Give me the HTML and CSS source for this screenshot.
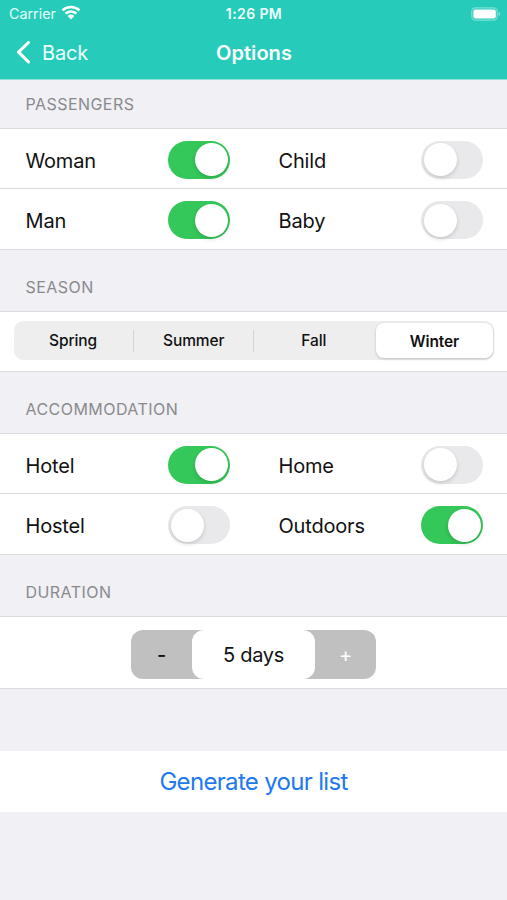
FILE: index.html
```html
<!DOCTYPE html>
<html lang="en">
<head>
<meta charset="utf-8">
<title>Options</title>
<link rel="stylesheet" href="styles.css">
</head>
<body>
<header class="top">
  <div class="status">
    <div class="carrier"><span>Carrier</span>
      <svg class="wifi" width="20" height="15" viewBox="0 0 20 15"><g fill="none" stroke="#fff" stroke-width="2.5"><path d="M1.500 5.400a12.400 12.400 0 0 1 17 0"/><path d="M4.500 8.700a7.900 7.900 0 0 1 11 0"/></g><path d="M6.600 10.900a4.900 4.900 0 0 1 6.800 0L10 14.500z" fill="#fff"/></svg>
    </div>
    <span class="clock">1:26 PM</span>
    <svg class="battery" width="30" height="14" viewBox="0 0 30 14"><rect x=".8" y=".8" width="25.4" height="12.4" rx="3.6" fill="none" stroke="#fff" stroke-opacity=".4" stroke-width="1.2"/><rect x="2.4" y="2.400" width="22.4" height="9.2" rx="2" fill="#fff"/><path d="M27.700 5v4q1.400-.6 1.400-2t-1.400-2z" fill="#fff" fill-opacity=".5"/></svg>
  </div>
  <nav class="nav">
    <a class="back"><svg width="16" height="24" viewBox="0 0 16 24"><path d="M13.500 1.500 3.500 11.200 13.500 20.900" fill="none" stroke="#fff" stroke-width="3" stroke-linecap="round" stroke-linejoin="round"/></svg><span>Back</span></a>
    <h1 class="title">Options</h1>
  </nav>
</header>
<main>
  <h2 class="label first">PASSENGERS</h2>
  <section class="group">
    <div class="row">
      <div class="cell"><span>Woman</span><i class="switch on"></i></div>
      <div class="cell"><span>Child</span><i class="switch"></i></div>
    </div>
    <div class="row">
      <div class="cell"><span>Man</span><i class="switch on"></i></div>
      <div class="cell"><span>Baby</span><i class="switch"></i></div>
    </div>
  </section>
  <h2 class="label">SEASON</h2>
  <section class="group season">
    <div class="segments">
      <span class="seg">Spring</span><span class="seg">Summer</span><span class="seg">Fall</span><span class="seg active">Winter</span>
    </div>
  </section>
  <h2 class="label">ACCOMMODATION</h2>
  <section class="group">
    <div class="row">
      <div class="cell"><span>Hotel</span><i class="switch on"></i></div>
      <div class="cell"><span>Home</span><i class="switch"></i></div>
    </div>
    <div class="row">
      <div class="cell"><span>Hostel</span><i class="switch"></i></div>
      <div class="cell"><span>Outdoors</span><i class="switch on"></i></div>
    </div>
  </section>
  <h2 class="label">DURATION</h2>
  <section class="group duration">
    <div class="stepper"><span class="step minus">-</span><span class="value">5 days</span><span class="step plus">+</span></div>
  </section>
  <a class="generate">Generate your list</a>
</main>
</body>
</html>
```
FILE: styles.css
```css
* { box-sizing: border-box; }
body {
  margin: 0;
  height: 900px;
  background: #f0f0f5;
  color: #111;
  font-family: Inter, "Liberation Sans", sans-serif;
  overflow: hidden;
}
h1, h2 { margin: 0; font-weight: 400; }

.top { height: 80px; background: #26ccb9; border-bottom: 1px solid #8fe0d7; color: #fff; }
.status {
  height: 27px;
  padding: 0 6px 0 9px;
  display: grid;
  grid-template-columns: 1fr auto 1fr;
  align-items: center;
}
.carrier { display: flex; align-items: center; gap: 5px; font-size: 14.3px; color: #e4fcf8; }
.wifi { margin-top: -2px; }
.clock { font-size: 14px; font-weight: 600; letter-spacing: .4px; color: #effffc; margin-right: 2px; }
.battery { justify-self: end; }
.nav {
  height: 51px;
  padding-left: 15px;
  display: grid;
  grid-template-columns: 1fr auto 1fr;
  align-items: center;
}
.back { display: flex; align-items: center; gap: 11px; font-size: 20px; letter-spacing: -.2px; color: #effffc; }
.title { font-size: 20px; font-weight: 600; letter-spacing: .05px; margin-right: 14px; }

.label {
  height: 61px;
  padding: 13px 25.5px 0;
  display: flex;
  align-items: center;
  font-size: 16px;
  letter-spacing: .45px;
  color: #8a8a8e;
}
.label.first { height: 48px; padding-top: 0; }

.group { background: #fff; border: solid #dcdce0; border-width: 1px 0; }
.row { height: 59px; display: grid; grid-template-columns: 253px 253px; }
.row + .row { border-top: 1px solid #dcdce0; height: 61px; }
.cell {
  display: flex;
  align-items: center;
  justify-content: space-between;
  padding: 2px 23px 0 25.5px;
  font-size: 20px;
  letter-spacing: -.18px;
}
.cell span { padding-top: 2px; }
.switch {
  width: 62px;
  height: 38px;
  padding: 2.5px;
  border-radius: 19px;
  background: #e9e9eb;
  display: flex;
}
.switch::before {
  content: "";
  width: 33px;
  height: 33px;
  border-radius: 50%;
  background: #fff;
  box-shadow: 0 2px 4px rgba(0, 0, 0, .15);
}
.switch.on { background: #34c759; justify-content: flex-end; }

.season { height: 61px; padding: 9px 13px 0 13.5px; }
.segments {
  height: 39px;
  display: grid;
  grid-template-columns: repeat(4, 1fr);
  align-items: center;
  background: #eee;
  border-radius: 9px;
  font-size: 15.5px;
  font-weight: 500;
  letter-spacing: -.1px;
}
.seg { height: 22px; line-height: 22px; text-align: center; margin-left: -1px; }
.seg + .seg:not(.active) { border-left: 1px solid #d4d4d8; }
.seg.active {
  height: 35px;
  line-height: 37px;
  margin-right: 1px;
  margin-left: 2px;
  border-radius: 8px;
  background: #fff;
  font-weight: 600;
  box-shadow: 0 1px 3px rgba(0, 0, 0, .2);
}

.duration { height: 73px; padding-top: 3px; display: flex; justify-content: center; align-items: center; }
.stepper {
  width: 245px;
  height: 49px;
  display: grid;
  grid-template-columns: 61px 1fr 61px;
  text-align: center;
  line-height: 50px;
  font-size: 20px;
  letter-spacing: -.3px;
  border-radius: 12px;
  background: #c0c0c0;
}
.value { height: 49px; background: #fff; border-radius: 12px; }
.minus { font-weight: 500; }
.plus { color: #fff; }

.generate {
  margin-top: 62px;
  height: 61px;
  display: flex;
  align-items: center;
  justify-content: center;
  background: #fff;
  color: #2079ee;
  font-size: 24px;
  letter-spacing: -.68px;
}
```
